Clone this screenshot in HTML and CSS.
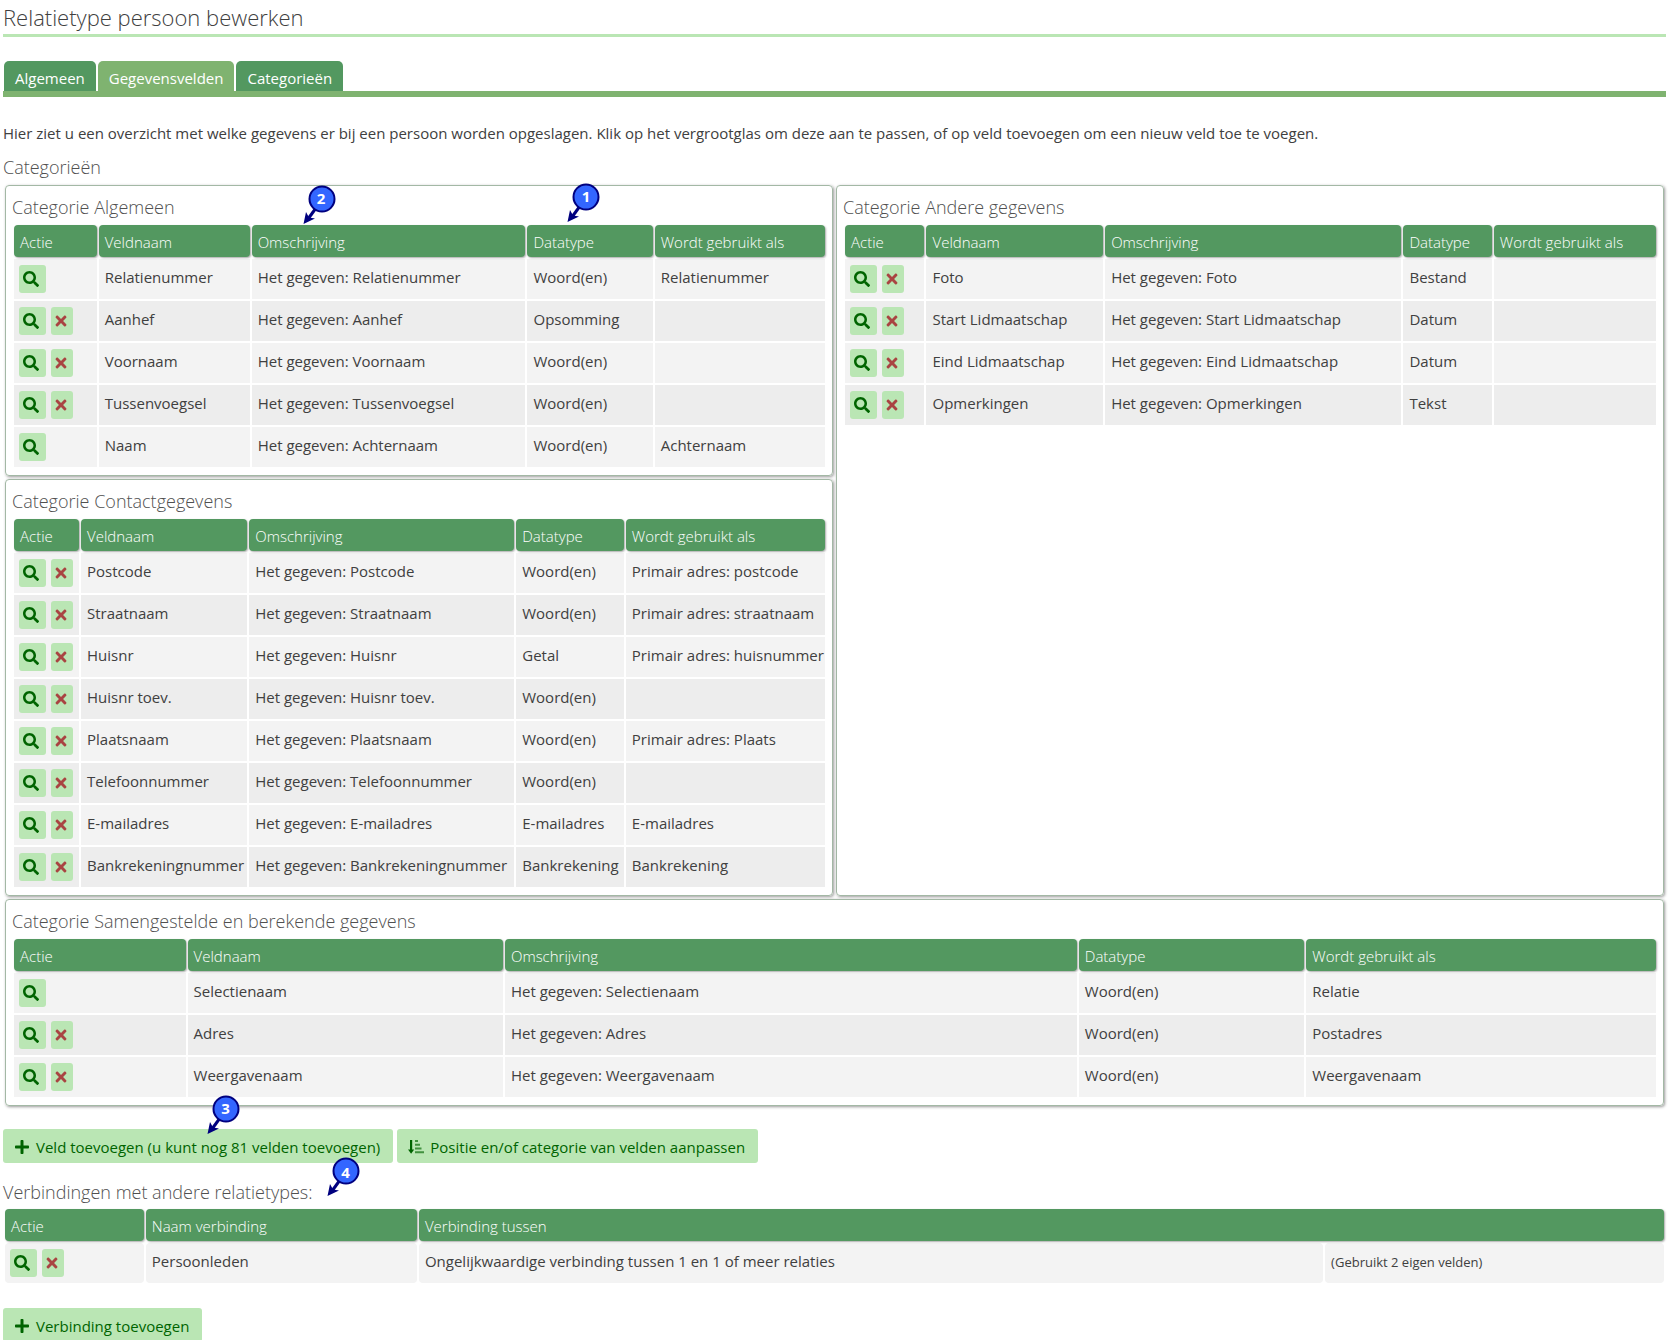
FILE: index.html
```html
<!DOCTYPE html>
<html lang="nl">
<head>
<meta charset="utf-8">
<title>Relatietype persoon bewerken</title>
<link rel="stylesheet" href="styles.css">
</head>
<body>
<svg class="sprite" aria-hidden="true">
  <symbol id="zoek" viewBox="0 0 512 512"><path d="M505 442.7L405.3 343c-4.5-4.5-10.6-7-17-7H372c27.6-35.3 44-79.7 44-128C416 93.1 322.9 0 208 0S0 93.1 0 208s93.1 208 208 208c48.3 0 92.7-16.4 128-44v16.3c0 6.4 2.5 12.5 7 17l99.7 99.7c9.4 9.4 24.6 9.4 33.9 0l28.3-28.3c9.4-9.4 9.4-24.6.1-34zM208 336c-70.7 0-128-57.2-128-128 0-70.7 57.2-128 128-128 70.7 0 128 57.2 128 128 0 70.7-57.2 128-128 128z"/></symbol>
  <symbol id="wis" viewBox="0 0 352 512"><path d="M242.72 256l100.07-100.07c12.28-12.28 12.28-32.19 0-44.48l-22.24-22.24c-12.28-12.28-32.19-12.28-44.48 0L176 189.28 75.93 89.21c-12.28-12.28-32.19-12.28-44.48 0L9.21 111.45c-12.28 12.28-12.28 32.19 0 44.48L109.28 256 9.21 356.07c-12.28 12.28-12.28 32.19 0 44.48l22.24 22.24c12.28 12.28 32.2 12.28 44.48 0L176 322.72l100.07 100.07c12.28 12.28 32.2 12.28 44.48 0l22.24-22.24c12.28-12.28 12.28-32.19 0-44.48L242.72 256z"/></symbol>
  <symbol id="plus" viewBox="0 0 448 512"><path d="M416 208H272V64c0-17.67-14.33-32-32-32h-32c-17.67 0-32 14.33-32 32v144H32c-17.67 0-32 14.33-32 32v32c0 17.67 14.33 32 32 32h144v144c0 17.67 14.33 32 32 32h32c17.67 0 32-14.33 32-32V304h144c17.67 0 32-14.33 32-32v-32c0-17.67-14.33-32-32-32z"/></symbol>
  <symbol id="sorteer" viewBox="0 0 16 16"><path d="M2 1h2.200v9.500H6.200L3.100 14.800 0 10.500h2z"/><path opacity=".65" d="M7 1h3v2H7zM7 4.700h5v2H7zM7 8.400h6.500v2H7zM7 12.200h9v2H7z"/></symbol>
  <symbol id="pijl" viewBox="0 0 34 40"><path d="M14 23L6 34" stroke="#00007f" stroke-width="3"/><path d="M1.500 39l2.500-12 3 5.500 6 1z" fill="#00007f"/><circle cx="20" cy="14" r="12.500" fill="#3366ff" stroke="#00007f" stroke-width="2"/></symbol>
</svg>

<h1>Relatietype persoon bewerken</h1>

<nav class="tabs">
  <a class="tab" href="#algemeen">Algemeen</a>
  <a class="tab tab-active" href="#gegevensvelden" aria-current="page">Gegevensvelden</a>
  <a class="tab" href="#categorieen">Categorieën</a>
</nav>

<main>
<p class="intro">Hier ziet u een overzicht met welke gegevens er bij een persoon worden opgeslagen. Klik op het vergrootglas om deze aan te passen, of op veld toevoegen om een nieuw veld toe te voegen.</p>
<h2>Categorieën</h2>

<div class="panels">
<section class="panel">
<h2>Categorie Algemeen</h2>
<table class="grid general">
<colgroup><col><col><col><col><col></colgroup>
<thead><tr><th>Actie</th><th>Veldnaam</th><th>Omschrijving<span class="pin"><svg><use href="#pijl"/></svg><b>2</b></span></th><th>Datatype<span class="pin pin-type"><svg><use href="#pijl"/></svg><b>1</b></span></th><th>Wordt gebruikt als</th></tr></thead>
<tbody>
<tr><td class="actions"><button class="act" aria-label="Bekijken"><svg><use href="#zoek"/></svg></button></td><td>Relatienummer</td><td>Het gegeven: Relatienummer</td><td>Woord(en)</td><td>Relatienummer</td></tr>
<tr><td class="actions"><button class="act" aria-label="Bekijken"><svg><use href="#zoek"/></svg></button><button class="act del" aria-label="Verwijderen"><svg><use href="#wis"/></svg></button></td><td>Aanhef</td><td>Het gegeven: Aanhef</td><td>Opsomming</td><td></td></tr>
<tr><td class="actions"><button class="act" aria-label="Bekijken"><svg><use href="#zoek"/></svg></button><button class="act del" aria-label="Verwijderen"><svg><use href="#wis"/></svg></button></td><td>Voornaam</td><td>Het gegeven: Voornaam</td><td>Woord(en)</td><td></td></tr>
<tr><td class="actions"><button class="act" aria-label="Bekijken"><svg><use href="#zoek"/></svg></button><button class="act del" aria-label="Verwijderen"><svg><use href="#wis"/></svg></button></td><td>Tussenvoegsel</td><td>Het gegeven: Tussenvoegsel</td><td>Woord(en)</td><td></td></tr>
<tr><td class="actions"><button class="act" aria-label="Bekijken"><svg><use href="#zoek"/></svg></button></td><td>Naam</td><td>Het gegeven: Achternaam</td><td>Woord(en)</td><td>Achternaam</td></tr>
</tbody>
</table>
</section>

<section class="panel panel-side">
<h2>Categorie Andere gegevens</h2>
<table class="grid other">
<colgroup><col><col><col><col><col></colgroup>
<thead><tr><th>Actie</th><th>Veldnaam</th><th>Omschrijving</th><th>Datatype</th><th>Wordt gebruikt als</th></tr></thead>
<tbody>
<tr><td class="actions"><button class="act" aria-label="Bekijken"><svg><use href="#zoek"/></svg></button><button class="act del" aria-label="Verwijderen"><svg><use href="#wis"/></svg></button></td><td>Foto</td><td>Het gegeven: Foto</td><td>Bestand</td><td></td></tr>
<tr><td class="actions"><button class="act" aria-label="Bekijken"><svg><use href="#zoek"/></svg></button><button class="act del" aria-label="Verwijderen"><svg><use href="#wis"/></svg></button></td><td>Start Lidmaatschap</td><td>Het gegeven: Start Lidmaatschap</td><td>Datum</td><td></td></tr>
<tr><td class="actions"><button class="act" aria-label="Bekijken"><svg><use href="#zoek"/></svg></button><button class="act del" aria-label="Verwijderen"><svg><use href="#wis"/></svg></button></td><td>Eind Lidmaatschap</td><td>Het gegeven: Eind Lidmaatschap</td><td>Datum</td><td></td></tr>
<tr><td class="actions"><button class="act" aria-label="Bekijken"><svg><use href="#zoek"/></svg></button><button class="act del" aria-label="Verwijderen"><svg><use href="#wis"/></svg></button></td><td>Opmerkingen</td><td>Het gegeven: Opmerkingen</td><td>Tekst</td><td></td></tr>
</tbody>
</table>
</section>

<section class="panel">
<h2>Categorie Contactgegevens</h2>
<table class="grid contact">
<colgroup><col><col><col><col><col></colgroup>
<thead><tr><th>Actie</th><th>Veldnaam</th><th>Omschrijving</th><th>Datatype</th><th>Wordt gebruikt als</th></tr></thead>
<tbody>
<tr><td class="actions"><button class="act" aria-label="Bekijken"><svg><use href="#zoek"/></svg></button><button class="act del" aria-label="Verwijderen"><svg><use href="#wis"/></svg></button></td><td>Postcode</td><td>Het gegeven: Postcode</td><td>Woord(en)</td><td>Primair adres: postcode</td></tr>
<tr><td class="actions"><button class="act" aria-label="Bekijken"><svg><use href="#zoek"/></svg></button><button class="act del" aria-label="Verwijderen"><svg><use href="#wis"/></svg></button></td><td>Straatnaam</td><td>Het gegeven: Straatnaam</td><td>Woord(en)</td><td>Primair adres: straatnaam</td></tr>
<tr><td class="actions"><button class="act" aria-label="Bekijken"><svg><use href="#zoek"/></svg></button><button class="act del" aria-label="Verwijderen"><svg><use href="#wis"/></svg></button></td><td>Huisnr</td><td>Het gegeven: Huisnr</td><td>Getal</td><td>Primair adres: huisnummer</td></tr>
<tr><td class="actions"><button class="act" aria-label="Bekijken"><svg><use href="#zoek"/></svg></button><button class="act del" aria-label="Verwijderen"><svg><use href="#wis"/></svg></button></td><td>Huisnr toev.</td><td>Het gegeven: Huisnr toev.</td><td>Woord(en)</td><td></td></tr>
<tr><td class="actions"><button class="act" aria-label="Bekijken"><svg><use href="#zoek"/></svg></button><button class="act del" aria-label="Verwijderen"><svg><use href="#wis"/></svg></button></td><td>Plaatsnaam</td><td>Het gegeven: Plaatsnaam</td><td>Woord(en)</td><td>Primair adres: Plaats</td></tr>
<tr><td class="actions"><button class="act" aria-label="Bekijken"><svg><use href="#zoek"/></svg></button><button class="act del" aria-label="Verwijderen"><svg><use href="#wis"/></svg></button></td><td>Telefoonnummer</td><td>Het gegeven: Telefoonnummer</td><td>Woord(en)</td><td></td></tr>
<tr><td class="actions"><button class="act" aria-label="Bekijken"><svg><use href="#zoek"/></svg></button><button class="act del" aria-label="Verwijderen"><svg><use href="#wis"/></svg></button></td><td>E-mailadres</td><td>Het gegeven: E-mailadres</td><td>E-mailadres</td><td>E-mailadres</td></tr>
<tr><td class="actions"><button class="act" aria-label="Bekijken"><svg><use href="#zoek"/></svg></button><button class="act del" aria-label="Verwijderen"><svg><use href="#wis"/></svg></button></td><td>Bankrekeningnummer</td><td>Het gegeven: Bankrekeningnummer</td><td>Bankrekening</td><td>Bankrekening</td></tr>
</tbody>
</table>
</section>

<section class="panel panel-wide">
<h2>Categorie Samengestelde en berekende gegevens</h2>
<table class="grid computed">
<colgroup><col><col><col><col><col></colgroup>
<thead><tr><th>Actie</th><th>Veldnaam</th><th>Omschrijving</th><th>Datatype</th><th>Wordt gebruikt als</th></tr></thead>
<tbody>
<tr><td class="actions"><button class="act" aria-label="Bekijken"><svg><use href="#zoek"/></svg></button></td><td>Selectienaam</td><td>Het gegeven: Selectienaam</td><td>Woord(en)</td><td>Relatie</td></tr>
<tr><td class="actions"><button class="act" aria-label="Bekijken"><svg><use href="#zoek"/></svg></button><button class="act del" aria-label="Verwijderen"><svg><use href="#wis"/></svg></button></td><td>Adres</td><td>Het gegeven: Adres</td><td>Woord(en)</td><td>Postadres</td></tr>
<tr><td class="actions"><button class="act" aria-label="Bekijken"><svg><use href="#zoek"/></svg></button><button class="act del" aria-label="Verwijderen"><svg><use href="#wis"/></svg></button></td><td>Weergavenaam</td><td>Het gegeven: Weergavenaam</td><td>Woord(en)</td><td>Weergavenaam</td></tr>
</tbody>
</table>
</section>
</div>

<div class="buttons">
  <button class="btn"><svg><use href="#plus"/></svg>Veld toevoegen (u kunt nog 81 velden toevoegen)<span class="pin pin-button"><svg><use href="#pijl"/></svg><b>3</b></span></button>
  <button class="btn"><svg><use href="#sorteer"/></svg>Positie en/of categorie van velden aanpassen</button>
</div>

<h2 class="links-title">Verbindingen met andere relatietypes:<span class="pin pin-title"><svg><use href="#pijl"/></svg><b>4</b></span></h2>
<table class="grid links">
<colgroup><col><col><col><col></colgroup>
<thead><tr><th>Actie</th><th>Naam verbinding</th><th colspan="2">Verbinding tussen</th></tr></thead>
<tbody>
<tr><td class="actions"><button class="act" aria-label="Bekijken"><svg><use href="#zoek"/></svg></button><button class="act del" aria-label="Verwijderen"><svg><use href="#wis"/></svg></button></td><td>Persoonleden</td><td>Ongelijkwaardige verbinding tussen 1 en 1 of meer relaties</td><td><small>(Gebruikt 2 eigen velden)</small></td></tr>
</tbody>
</table>

<div class="buttons">
  <button class="btn"><svg><use href="#plus"/></svg>Verbinding toevoegen</button>
</div>
</main>
</body>
</html>
```
FILE: styles.css
```css
* { box-sizing: border-box; }

body {
  margin: 0;
  padding: 0 7px 0 3px;
  background: #fff;
  color: #404040;
  font: 15px/24px "Open Sans", "Noto Sans", sans-serif;
}

.sprite { display: none; }
svg { fill: currentColor; }

h1 {
  margin: 0 0 24px;
  height: 37px;
  border-bottom: 3px solid #bae6b4;
  font-size: 22px;
  font-weight: 300;
  line-height: 34px;
}

h2 {
  margin: 0;
  color: #505050;
  font-size: 18px;
  font-weight: 300;
  line-height: 28px;
}

.tabs {
  display: flex;
  gap: 2px;
  padding-left: 1px;
  border-bottom: 6px solid #7fb370;
}

.tab {
  height: 30px;
  padding: 0 11px;
  border-radius: 5px 5px 0 0;
  background: #539860;
  color: #fff;
  line-height: 35px;
  text-decoration: none;
}

.tab-active { background: #7fb370; }

.intro { margin: 24px 0 8px; }

.panels {
  display: grid;
  grid-template-columns: 1fr 1fr;
  gap: 3px;
  margin: 4px 0 0;
  padding: 0 2px;
}

.panel {
  padding: 7px 5px 6px 6px;
  border: 1px solid #a3b8a5;
  border-radius: 4px;
  box-shadow: 1px 1px 3px #999;
}

.panel-side { grid-column: 2; grid-row: 1 / span 2; }
.panel-wide { grid-column: 1 / -1; }
.panel h2 { padding-bottom: 2px; }

.grid {
  width: 100%;
  border-spacing: 2px;
  table-layout: fixed;
}

.grid th {
  position: relative;
  height: 32px;
  padding: 2px 6px 0;
  border-radius: 4px;
  background: #539860;
  box-shadow: 1px 1px 2px #aaa;
  color: #fff;
  font-weight: 300;
  text-align: left;
}

.grid td {
  height: 40px;
  padding: 6px 6px 0;
  background: #f3f3f3;
  vertical-align: top;
  white-space: nowrap;
}

.grid .actions { padding-left: 5px; }
.grid tbody tr:nth-child(even) td { background: #ededed; }

small { font-size: 13px; }

.general col:nth-child(1) { width: 10.3%; }
.general col:nth-child(2) { width: 18.8%; }
.general col:nth-child(3) { width: 34.1%; }
.general col:nth-child(4) { width: 15.6%; }
.other col:nth-child(1) { width: 9.9%; }
.other col:nth-child(2) { width: 22%; }
.other col:nth-child(3) { width: 36.9%; }
.other col:nth-child(4) { width: 11%; }
.contact col:nth-child(1) { width: 8.1%; }
.contact col:nth-child(2) { width: 20.7%; }
.contact col:nth-child(3) { width: 33%; }
.contact col:nth-child(4) { width: 13.4%; }
.computed col:nth-child(1) { width: 10.5%; }
.computed col:nth-child(2) { width: 19.3%; }
.computed col:nth-child(3) { width: 35%; }
.computed col:nth-child(4) { width: 13.8%; }
.links col:nth-child(1) { width: 8.4%; }
.links col:nth-child(2) { width: 16.4%; }
.links col:nth-child(3) { width: 54.7%; }
.links td { border-radius: 4px; }

button {
  border: 0;
  border-radius: 3px;
  background: #bae6b4;
  color: #006400;
  font: inherit;
}

.act {
  width: 27px;
  height: 28px;
  margin-right: 5px;
  padding: 0 4px;
  vertical-align: top;
}

.act svg { display: block; width: 16px; height: 16px; }
.act.del { width: 22px; margin: 0; padding: 0 2px; color: #a94442; }

.buttons {
  display: flex;
  gap: 4px;
  margin-top: 23px;
}

.btn {
  position: relative;
  display: flex;
  align-items: center;
  gap: 6px;
  height: 34px;
  padding: 2px 13px 0 11px;
}

.btn > svg { width: 16px; height: 16px; }

.links-title {
  position: relative;
  width: max-content;
  padding: 15px 0 1px;
}

/* Numbered markers that point at the explained parts. */
.pin {
  position: absolute;
  z-index: 1;
  left: 50px;
  top: -40px;
  width: 34px;
  height: 40px;
}

.pin svg { display: block; width: 34px; height: 40px; }

.pin b {
  position: absolute;
  left: 7px;
  top: 1px;
  width: 25px;
  color: #fff;
  font-size: 15px;
  font-weight: 700;
  text-align: center;
}

.pin-type { left: 39px; top: -42px; }
.pin-button { left: 203px; top: -34px; }
.pin-title { left: 323px; top: -6px; }
```
